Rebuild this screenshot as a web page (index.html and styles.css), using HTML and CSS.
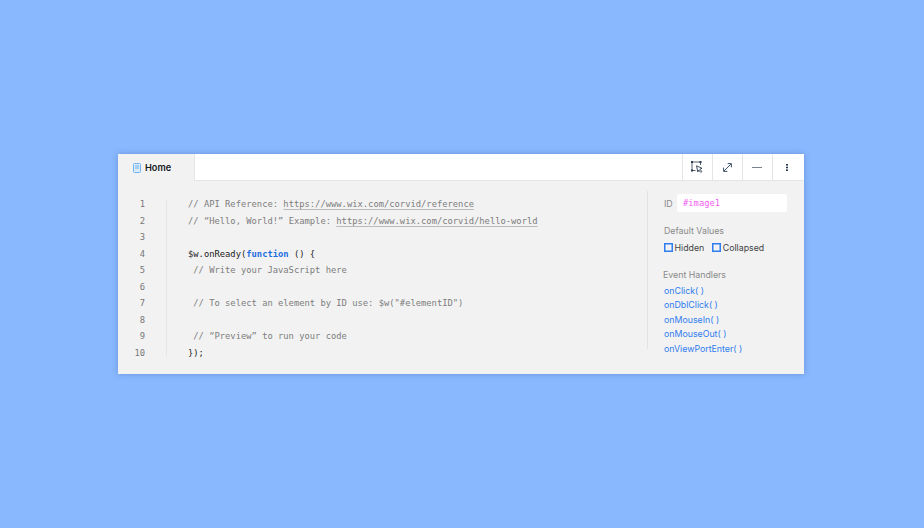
FILE: index.html
```html
<!DOCTYPE html>
<html lang="en">
<head>
<meta charset="utf-8">
<title>Code editor</title>
<link rel="stylesheet" href="styles.css">
</head>
<body>
<main class="window">
  <header class="topbar">
    <div class="tab">
      <svg class="tab-icon" width="8" height="10" viewBox="0 0 8 10"><rect x="0.500" y="0.500" width="7" height="9" rx="1" fill="#dcebfb" stroke="#6fb2f0"/><path d="M2 3h4M2 5h4" stroke="#6fb2f0"/></svg>
      <span>Home</span>
    </div>
    <div class="tools">
      <button class="tool"><svg width="12" height="12" viewBox="0 0 12 12" fill="none" stroke="#2b3b4f" stroke-width="0.800"><path d="M1 1h8.500M1 1v8.500M1 9.500h3.500M9.500 1v3"/><rect y="0" width="2" height="2" fill="#2b3b4f" stroke="none"/><rect x="8.500" y="0" width="2" height="2" fill="#2b3b4f" stroke="none"/><rect y="8.500" width="2" height="2" fill="#2b3b4f" stroke="none"/><path d="M5.500 4.800l5.500 2.500-2.200.9 2 2.300-1 .9-2-2.300-1 1.900z" fill="#fff" stroke-width="0.900"/></svg></button>
      <button class="tool"><svg width="9" height="9" viewBox="0 0 9 9" fill="none" stroke="#3b526b"><path d="M1 8l7-7M4.700.600h3.700v3.700M.600 4.700v3.700h3.700"/></svg></button>
      <button class="tool"><span class="dash"></span></button>
      <button class="tool tool-last"><svg width="2" height="7" viewBox="0 0 2 7" fill="#2b3b4f"><rect width="2" height="1.600"/><rect y="2.700" width="2" height="1.600"/><rect y="5.400" width="2" height="1.600"/></svg></button>
    </div>
  </header>
  <div class="body">
    <section class="editor">
      <ol class="gutter">
        <li>1</li><li>2</li><li>3</li><li>4</li><li>5</li><li>6</li><li>7</li><li>8</li><li>9</li><li>10</li>
      </ol>
      <div class="code">
        <div class="line c">// API Reference: <span class="url">https://www.wix.com/corvid/reference</span></div>
        <div class="line c">// “Hello, World!” Example: <span class="url">https://www.wix.com/corvid/hello-world</span></div>
        <div class="line"></div>
        <div class="line">$w.onReady(<b class="kw">function</b> () {</div>
        <div class="line c ind">// Write your JavaScript here</div>
        <div class="line"></div>
        <div class="line c ind">// To select an element by ID use: $w("#elementID")</div>
        <div class="line"></div>
        <div class="line c ind">// “Preview” to run your code</div>
        <div class="line">});</div>
      </div>
    </section>
    <aside class="panel">
      <div class="id-row">
        <span class="label id-label">ID</span>
        <span class="id-value">#image1</span>
      </div>
      <h3 class="label heading">Default Values</h3>
      <div class="checks">
        <span class="check"><svg class="box" width="9" height="9" viewBox="0 0 9 9"><rect x="0.750" y="0.750" width="7.500" height="7.500" fill="none" stroke="#2f7df0" stroke-width="1.500"/></svg>Hidden</span>
        <span class="check"><svg class="box" width="9" height="9" viewBox="0 0 9 9"><rect x="0.750" y="0.750" width="7.500" height="7.500" fill="none" stroke="#2f7df0" stroke-width="1.500"/></svg>Collapsed</span>
      </div>
      <h3 class="label heading handlers">Event Handlers</h3>
      <ul class="events">
        <li>onClick( )</li>
        <li>onDblClick( )</li>
        <li>onMouseIn( )</li>
        <li>onMouseOut( )</li>
        <li>onViewPortEnter( )</li>
      </ul>
    </aside>
  </div>
</main>
</body>
</html>
```
FILE: styles.css
```css
* { box-sizing: border-box; }
html, body { height: 100%; }
body {
  margin: 0;
  background: #8ab8ff;
  font-family: "Inter", "Liberation Sans", sans-serif;
  padding: 154px 120px 0 118px;
  overflow: hidden;
}
.window {
  width: 686px;
  height: 220px;
  background: #f2f2f2;
  box-shadow: 0 0 6px rgba(40, 80, 150, 0.35);
  display: flex;
  flex-direction: column;
}
.topbar {
  height: 27px;
  background: #fff;
  display: flex;
  justify-content: space-between;
  border-bottom: 1px solid #e4e5e7;
}
.tab {
  width: 77px;
  height: 27px;
  background: #f2f2f2;
  border-right: 1px solid #e4e5e7;
  display: flex;
  align-items: center;
  gap: 4px;
  padding-left: 15px;
  font-size: 9.200px;
  font-weight: 600;
  color: #16181c;
}
.tools { display: flex; }
.tool {
  width: 30px;
  height: 26px;
  padding: 0 1px 0 0;
  border: 0;
  border-left: 1px solid #e4e5e7;
  background: #fff;
  display: flex;
  align-items: center;
  justify-content: center;
}
.tool-last { width: 32px; padding-right: 4px; }
.dash { width: 10px; height: 1px; background: #77838f; }
.body { flex: 1; display: flex; }
.editor {
  width: 529px;
  display: flex;
  padding-top: 15px;
  font-family: "DejaVu Sans Mono", "Liberation Mono", monospace;
  font-size: 8.800px;
  line-height: 16.500px;
}
.gutter {
  list-style: none;
  margin: 0;
  padding: 0 22px 0 0;
  width: 49px;
  height: 161px;
  background: linear-gradient(#e6e6e6, #e6e6e6) no-repeat right bottom / 1px 158px;
  text-align: right;
  color: #777;
}
.code { padding-left: 21px; color: #222; }
.line { height: 16.500px; white-space: pre; }
.c { color: #7d7d7d; }
.ind { padding-left: 1ch; }
.url { text-decoration: underline; text-decoration-color: #bbb; text-underline-offset: 2px; }
.kw { color: #1d6fe0; font-weight: 700; }
.panel {
  margin-top: 10px;
  height: 158px;
  flex: 1;
  border-left: 1px solid #e2e2e2;
  padding: 3px 17px 0 16px;
  font-size: 8.800px;
}
.label { color: #8a8a8a; font-weight: 400; font-size: 8.800px; margin: 0; }
.id-row { display: flex; align-items: center; }
.id-label { width: 13px; }
.id-value {
  flex: 1;
  height: 18px;
  background: #fff;
  border-radius: 2px;
  padding-left: 6px;
  display: flex;
  align-items: center;
  font-family: "DejaVu Sans Mono", monospace;
  font-size: 8.800px;
  color: #f45cf2;
}
.heading { margin-top: 13px; line-height: 12px; }
.checks { display: flex; gap: 8px; margin-top: 5px; color: #444; }
.check { display: flex; align-items: center; gap: 1.500px; }
.box { display: block; flex: none; }
.handlers { margin-top: 16px; margin-left: -1px; }
.events {
  list-style: none;
  margin: 3px 0 0;
  padding: 0;
  color: #2f7df0;
  line-height: 14.400px;
}
```
